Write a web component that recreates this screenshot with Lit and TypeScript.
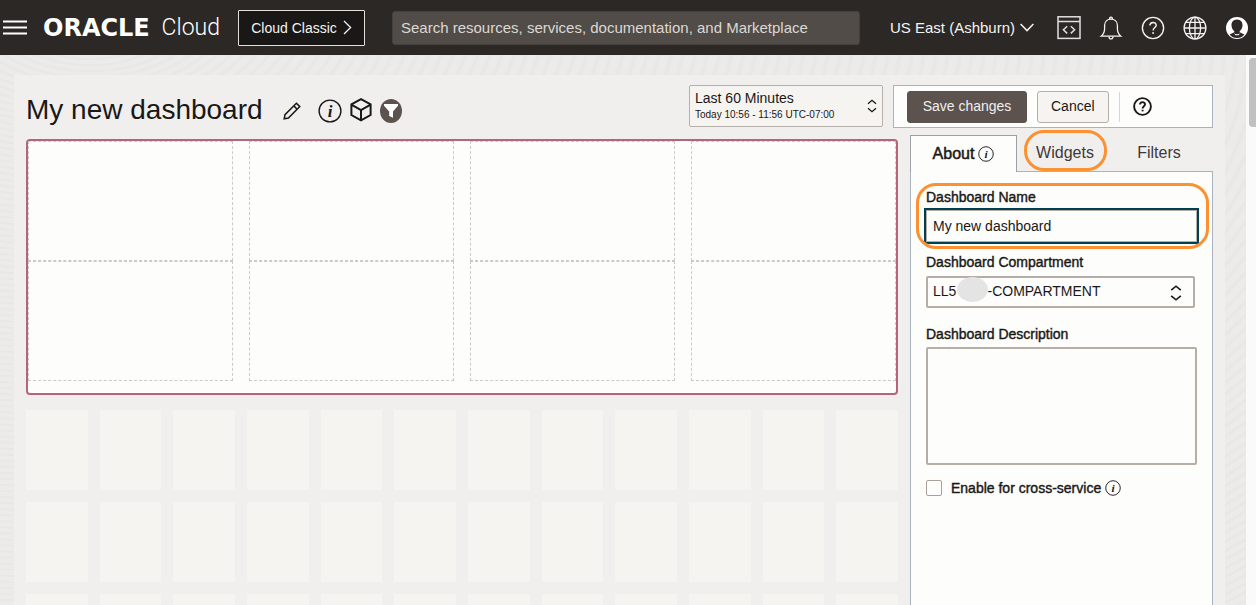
import { LitElement, html, css } from "lit";
import { customElement, state } from "lit/decorators.js";

const infoIcon = (size: number) => html`
  <svg width=${size} height=${size} viewBox="0 0 24 24" aria-hidden="true">
    <circle cx="12" cy="12" r="10.9" fill="none" stroke="currentColor" stroke-width="1.4" />
    <text x="12" y="17.6" text-anchor="middle" font-family="Liberation Serif, serif" font-style="italic" font-weight="700" font-size="17" fill="currentColor" stroke="none">i</text>
  </svg>`;

const helpIcon = (size: number, stroke: number) => html`
  <svg width=${size} height=${size} viewBox="0 0 24 24" fill="none" stroke="currentColor" stroke-width=${stroke} aria-hidden="true">
    <circle cx="12" cy="12" r="10.6" />
    <path d="M8.9 9.6 C8.9 5.4 15.2 5.5 15.2 9.3 C15.2 11.6 12.1 11.6 12.1 14.4" />
    <path d="M12.1 16.1 V18.1" />
  </svg>`;

const sorter = (w: number, h: number) => html`
  <svg class="sorter" width=${w} height=${h} viewBox="0 0 12 16" fill="none" stroke="currentColor" stroke-width="1.6" aria-hidden="true">
    <path d="M1.2 5.2 L6 1.2 L10.8 5.2 M1.2 10.8 L6 14.8 L10.8 10.8" />
  </svg>`;

@customElement("cloud-header")
class CloudHeader extends LitElement {
  static styles = css`
    :host { display: block; flex: none; background: #2c2825; color: #f5f3f1; font-family: "Liberation Sans", Arial, sans-serif; }
    .bar { display: flex; align-items: center; height: 55px; padding: 0 7px 0 3px; box-sizing: border-box; }
    button { font: inherit; color: inherit; background: none; border: 0; padding: 0; display: flex; align-items: center; justify-content: center; }
    svg { display: block; flex: none; }
    .brand { display: flex; align-items: center; justify-content: space-between; width: 177px; margin-left: 16px; color: #fff; text-decoration: none; }
    .oracle { font: 700 24px/28px "DejaVu Sans", sans-serif; }
    .cloud { font: 300 23px/28px Roboto, sans-serif; }
    .classic { box-sizing: border-box; width: 127px; height: 36px; margin-left: 18px; gap: 6px; border: 1px solid #e4e1dd; border-radius: 1px; background: #1a1816; font-size: 14px; }
    .search { flex: 1; min-width: 0; box-sizing: border-box; height: 34px; margin: 0 30px 0 27px; padding: 0 8px; border: 1px solid #45403c; border-radius: 3px; background: #514c47; color: #e0dcd8; font: 15px "Liberation Sans", Arial, sans-serif; }
    .search::placeholder { color: #dcd8d4; opacity: 1; }
    .region { gap: 5px; font-size: 15px; margin-right: 23px; }
    .icons { display: flex; gap: 18px; }
  `;

  render() {
    return html`
      <header class="bar">
        <button aria-label="Menu">
          <svg width="24" height="16" viewBox="0 0 24 16" stroke="#fff" stroke-width="2"><path d="M0 1.5H24M0 7.5H24M0 13.5H24" /></svg>
        </button>
        <a class="brand" href="#"><span class="oracle">ORACLE</span><span class="cloud">Cloud</span></a>
        <button class="classic">Cloud Classic
          <svg width="9" height="15" viewBox="0 0 9 15" fill="none" stroke="currentColor" stroke-width="1.3"><path d="M1 1L7.6 7.5L1 14" /></svg>
        </button>
        <input class="search" type="search" aria-label="Search" placeholder="Search resources, services, documentation, and Marketplace" />
        <button class="region">US East (Ashburn)
          <svg width="14" height="9" viewBox="0 0 14 9" fill="none" stroke="currentColor" stroke-width="1.5"><path d="M.6 1L7 7.6L13.4 1" /></svg>
        </button>
        <nav class="icons">
          <button aria-label="Developer tools">
            <svg width="24" height="24" viewBox="0 0 24 24" fill="none" stroke="#e4dfdf" stroke-width="1.5">
              <rect x="1" y=".8" width="22" height="21.6" /><path d="M1 5.5H23" />
              <path d="M10.2 10.2L6.4 13.8L10.2 17.4M13.8 10.2L17.6 13.8L13.8 17.4" stroke-width="1.5" />
            </svg>
          </button>
          <button aria-label="Notifications">
            <svg width="24" height="24" viewBox="0 0 24 24" fill="none" stroke="currentColor" stroke-width="1.3">
              <path d="M2.2 20.2Q5.6 17.6 5.6 12.6V9.3C5.6 1.1 18.4 1.1 18.4 9.3V12.6Q18.4 17.6 21.8 20.2Z" />
              <path d="M10.7 3.2V2Q12 .2 13.3 2V3.2M10 20.4Q10 22.9 12 22.9T14 20.4" />
            </svg>
          </button>
          <button aria-label="Help">${helpIcon(24, 1.4)}</button>
          <button aria-label="Language">
            <svg width="24" height="24" viewBox="0 0 24 24" fill="none" stroke="currentColor" stroke-width="1.3">
              <circle cx="12" cy="12" r="10.9" /><ellipse cx="12" cy="12" rx="5.6" ry="10.9" />
              <path d="M12 1V23M1 12H23M2.8 6.3H21.2M2.8 17.7H21.2" />
            </svg>
          </button>
          <button aria-label="Profile">
            <svg width="24" height="24" viewBox="0 0 24 24">
              <circle cx="12" cy="12" r="11" fill="#fff" />
              <path d="M12 3.4C7.8 3.4 6.3 6.6 6.5 9.4C6.6 12 8 14 9.3 15V16.2L4.6 18.6C6.4 21 9 22.1 12 22.1S17.6 21 19.4 18.6L14.7 16.2V15C16 14 17.4 12 17.5 9.4C17.7 6.6 16.2 3.4 12 3.4Z" fill="#2c2825" />
              <path d="M9 17.3Q12 19 15 17.3L13.6 19.3H10.4Z" fill="#fff" />
            </svg>
          </button>
        </nav>
      </header>`;
  }
}

@customElement("settings-panel")
class SettingsPanel extends LitElement {
  static styles = css`
    :host { display: flex; flex-direction: column; color: #1a1816; font-family: "Liberation Sans", Arial, sans-serif; font-size: 14px; }
    svg { display: block; flex: none; }
    .tabs { display: flex; height: 37px; }
    .tabs::after { content: ""; flex: 12 1 0; border-bottom: 1px solid #a8b3bf; }
    .tab { position: relative; box-sizing: border-box; border: 0; border-bottom: 1px solid #a8b3bf; padding: 0; background: none; font: inherit; font-size: 16px; color: #3d3936; display: flex; align-items: center; justify-content: center; gap: 4px; flex: 100 1 0; }
    .tab:last-child { flex-grow: 84; }
    .tab.active { flex-grow: 105; border: 1px solid #9ba1a6; border-bottom: 0; background: #fdfdfc; color: #1a1816; -webkit-text-stroke: 0.5px; }
    .panel { flex: 1; display: flex; flex-direction: column; padding: 17px 15px; background: #fdfdfc; border: 1px solid #a8b3bf; border-width: 0 1px; }
    .label { display: block; line-height: 16px; -webkit-text-stroke: 0.4px; }
    .field { position: relative; }
    .field + .field { margin-top: 12px; }
    .field + .field.text { margin-top: 18px; }
    .box { display: block; width: 100%; box-sizing: border-box; margin: 5px 0 0; background: #fdfdfc; color: #1a1816; font: inherit; border: 2px solid #b6ada7; border-radius: 2px; }
    input.box { height: 32px; padding: 0 6px; border: 1px solid #b6ada7; outline: 2px solid #00404f; border-radius: 0; }
    select.box { height: 32px; width: calc(100% - 2px); margin-top: 6px; padding: 0 5px 2px; appearance: none; }
    textarea.box { height: 118px; resize: none; }
    .picker { position: relative; }
    .picker .sorter { position: absolute; right: 15px; top: 9px; pointer-events: none; }
    .mask { position: absolute; left: 31px; top: 1px; width: 31px; height: 25px; border-radius: 50%; background: #e4e4e4; }
    .ring { position: absolute; border: 3px solid #fb9130; pointer-events: none; box-sizing: border-box; }
    .ring.tab-ring { inset: -5px 10px 0 7px; border-radius: 20px; }
    .ring.field-ring { inset: -6px -12px -7px -10px; border-radius: 20px; }
    .check { display: flex; align-items: center; gap: 4px; margin-top: 15px; }
    .check input { appearance: none; width: 16px; height: 16px; margin: 0 5px 0 0; border: 1px solid #a8a09a; border-radius: 2px; background: #fdfdfc; }
  `;

  @state() private tab = "About";

  private renderTab(name: string) {
    return html`
      <button class="tab ${this.tab === name ? "active" : ""}" role="tab" aria-selected=${this.tab === name} @click=${() => (this.tab = name)}>
        ${name}${name === "About" ? infoIcon(16) : ""}${name === "Widgets" ? html`<span class="ring tab-ring"></span>` : ""}
      </button>`;
  }

  render() {
    return html`
      <div class="tabs" role="tablist">${["About", "Widgets", "Filters"].map((t) => this.renderTab(t))}</div>
      <div class="panel" role="tabpanel">
        <div class="field">
          <label class="label" for="name">Dashboard Name</label>
          <input class="box" id="name" .value=${"My new dashboard"} />
          <span class="ring field-ring"></span>
        </div>
        <div class="field">
          <label class="label" for="compartment">Dashboard Compartment</label>
          <div class="picker">
            <select class="box" id="compartment"><option>LL5${"\u00a0".repeat(8)}-COMPARTMENT</option></select>
            <span class="mask"></span>
            ${sorter(12, 16)}
          </div>
        </div>
        <div class="field text">
          <label class="label" for="description">Dashboard Description</label>
          <textarea class="box" id="description"></textarea>
        </div>
        <div class="check">
          <input type="checkbox" id="cross" />
          <label class="label" for="cross">Enable for cross-service</label>
          ${infoIcon(16)}
        </div>
      </div>`;
  }
}

@customElement("app-root")
class AppRoot extends LitElement {
  static styles = css`
    :host { display: flex; flex-direction: column; height: 100vh; overflow: hidden; color: #1a1816; font-family: "Liberation Sans", Arial, sans-serif; font-size: 14px; }
    svg { display: block; flex: none; }
    button { font: inherit; color: inherit; }
    .view { flex: 1; min-height: 0; display: flex; }
    .page {
      flex: 1; min-width: 0; display: flex; padding: 20px 20px 0 14px; background-color: #ecebe9;
      background-image: repeating-radial-gradient(ellipse at 90px -30px, transparent 0 5px, rgb(0 0 0 / 1.4%) 7px 9px, transparent 11px 12px);
    }
    .sheet { flex: 1; min-width: 0; display: flex; flex-direction: column; padding: 10px 12px 0; background: #f1efee; }
    .toolbar { display: flex; align-items: flex-start; height: 43px; }
    .title { display: flex; align-items: center; flex: 1; min-width: 0; padding-top: 7px; }
    h1 { margin: 0 20px 0 0; font-size: 28px; line-height: 36px; font-weight: 400; white-space: nowrap; }
    .tools { display: flex; align-items: center; gap: 8px; padding-top: 2px; }
    .tool { border: 0; padding: 0; background: none; }
    .tool.edit { margin-right: 9px; }
    .range { box-sizing: border-box; display: flex; align-items: center; justify-content: space-between; width: 194px; height: 42px; margin-right: 10px; padding: 0 5px; border: 1px solid #b6b0aa; border-radius: 2px; background: #f6f4f1; text-align: left; }
    .range-main { display: block; line-height: 18px; }
    .range-sub { display: block; font-size: 10px; line-height: 16px; }
    .actions { box-sizing: border-box; display: flex; align-items: center; width: 320px; height: 43px; padding: 0 13px; border: 1px solid #a8b3bf; background: #fdfdfc; }
    .btn { box-sizing: border-box; height: 32px; border: 1px solid #b6ada7; border-radius: 3px; padding: 0 13px 2px; background: #f6f4f1; }
    .btn.primary { width: 120px; margin-right: 10px; border-color: #5c524e; background: #5c524e; color: #f1efee; padding: 0 0 2px; }
    .divider { width: 1px; height: 30px; margin: 0 13px 0 10px; background: #d8d5d2; }
    .body { flex: 1; min-height: 0; display: flex; gap: 12px; padding-top: 7px; }
    .main { flex: 1; min-width: 0; padding-top: 4px; overflow: hidden; }
    .canvas { display: grid; grid-template-columns: repeat(4, 1fr); grid-auto-rows: 120px; column-gap: 16px; padding-bottom: 12px; border: 2px solid #b5657a; border-radius: 4px; background: #fdfdfc; }
    .slot { border: 1px dashed #c9cacd; }
    .tiles { display: grid; grid-template-columns: repeat(12, 1fr); grid-auto-rows: 80px; gap: 12px; margin-top: 15px; }
    .tile { background: #f6f4f1; }
    .side { width: 303px; flex: none; }
    .scroll { box-sizing: border-box; width: 11px; padding: 3px 0 0 3px; background: #fafafa; border-left: 1px solid #e8e8e8; }
    .thumb { height: 69px; border-radius: 4px 0 0 4px; background: #c1c1c1; }
  `;

  render() {
    return html`
      <cloud-header></cloud-header>
      <div class="view">
        <main class="page">
          <div class="sheet">
            <div class="toolbar">
              <div class="title">
                <h1>My new dashboard</h1>
                <div class="tools">
                  <button class="tool edit" aria-label="Edit name">
                    <svg width="18" height="18" viewBox="0 0 18 18" fill="none" stroke="currentColor" stroke-width="1.5"><path d="M1.2 16.8L2 12.7L13.4 1.3L16.8 4.6L5.4 16ZM10.8 3.9L14.1 7.2" /></svg>
                  </button>
                  <button class="tool" aria-label="Information">${infoIcon(24)}</button>
                  <button class="tool" aria-label="Resources">
                    <svg width="22" height="26" viewBox="0 0 22 26" fill="none" stroke="currentColor" stroke-width="2"><path d="M11 1.2L20.6 6.4V17L11 22.4L1.4 17V6.4ZM1.4 6.6L11 12L20.6 6.6M11 12V22.2" /></svg>
                  </button>
                  <button class="tool" aria-label="Filters">
                    <svg width="22" height="24" viewBox="0 0 22 24"><ellipse cx="11" cy="12" rx="11" ry="12" fill="#5c524e" /><path d="M4 5H18V6.8L13 12.4V18.8L9.2 17V12.4L4 6.8Z" fill="#fff" /></svg>
                  </button>
                </div>
              </div>
              <button class="range">
                <span><span class="range-main">Last 60 Minutes</span><span class="range-sub">Today 10:56 - 11:56 UTC-07:00</span></span>
                ${sorter(10, 14)}
              </button>
              <div class="actions">
                <button class="btn primary">Save changes</button>
                <button class="btn">Cancel</button>
                <span class="divider"></span>
                <button class="tool" aria-label="Help">${helpIcon(19, 2.4)}</button>
              </div>
            </div>
            <div class="body">
              <section class="main">
                <div class="canvas">${Array.from({ length: 8 }, () => html`<div class="slot"></div>`)}</div>
                <div class="tiles">${Array.from({ length: 36 }, () => html`<div class="tile"></div>`)}</div>
              </section>
              <settings-panel class="side"></settings-panel>
            </div>
          </div>
        </main>
        <div class="scroll"><div class="thumb"></div></div>
      </div>`;
  }
}
